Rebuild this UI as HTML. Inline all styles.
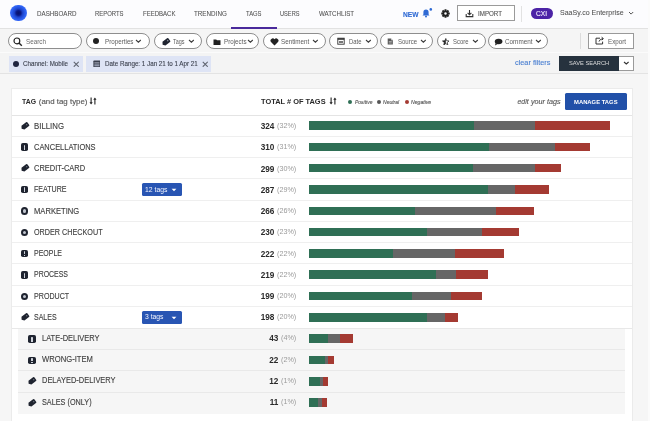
<!DOCTYPE html>
<html><head><meta charset="utf-8">
<style>
*{box-sizing:border-box;margin:0;padding:0}
html,body{width:650px;height:421px;overflow:hidden;background:#f6f6f6;font-family:"Liberation Sans",sans-serif;color:#333}
#wrap{position:absolute;left:0;top:0;width:650px;height:421px;overflow:hidden}
.a{position:absolute}
.t{position:absolute;line-height:1;white-space:nowrap;-webkit-text-stroke:0.12px currentColor}
#hdr{left:0;top:0;width:648px;height:28.5px;background:#fcfcfe;border-bottom:1px solid #e2e2e2}
#fbar{left:0;top:28.5px;width:648px;height:24.5px;background:#f5f5f5;border-bottom:1px solid #fbfbfb}
#crow{left:0;top:53px;width:648px;height:21px;background:#f4f4f4;border-bottom:1px solid #e3e3e3}
.pill{position:absolute;top:33.1px;height:16px;border:1px solid #8e8e8e;border-radius:8px;background:#fff}
.chip{position:absolute;top:55.7px;height:16px;background:#dee4f5}
#card{left:11px;top:88.3px;width:621.6px;height:340px;background:#fff;border:1px solid #ebebeb}
.rl{position:absolute;left:12px;width:619.6px;height:1px;background:#efefef}
.bar{position:absolute;height:8.6px}
.g{background:#2f6f55}.n{background:#666}.r{background:#a43a32}
.ico{position:absolute;width:7.4px;height:7.4px}
.ico.alert{background:#1f2430;border-radius:1.8px}
.ico.alert::before{content:"";position:absolute;left:2.9px;top:1.3px;width:1.6px;height:3.2px;border-radius:0.6px;background:#d0d4dc}.ico.alert::after{content:"";position:absolute;left:2.9px;top:5.0px;width:1.6px;height:1.3px;background:#d0d4dc}
.ico.circ{width:7.6px;height:7.6px;border:2.8px solid #1f2430;border-radius:50%;background:#c0c5ce}
.ico.tag::before{content:"";position:absolute;left:0.2px;top:1.6px;width:7.6px;height:4.6px;background:#1f2430;border-radius:1.5px 2.3px 2.3px 1.5px;transform:rotate(-40deg)}
.badge{position:absolute;width:39.5px;height:13px;background:#2855b3;border-radius:1.5px}
</style></head><body><div id="wrap" style="filter:blur(0.35px)">
<div id="hdr" class="a"></div>
<div id="fbar" class="a"></div>
<div id="crow" class="a"></div>
<div class="a" style="left:648px;top:0;width:2px;height:421px;background:#fbfbfb"></div>

<!-- logo -->
<div class="a" style="left:10px;top:4.7px;width:16.6px;height:16.6px;border-radius:50%;background:radial-gradient(circle,#08126a 0,#0b1a86 20%,#1d44cc 36%,#2b5cec 56%,#3a70ff 76%,rgba(80,130,255,0.55) 90%,rgba(120,160,255,0) 100%)"></div>
<div class="a" style="left:231px;top:27px;width:45.5px;height:2px;background:#4a2a9c"></div>

<!-- right header -->
<svg class="a" style="left:421.3px;top:7.8px" width="12" height="10" viewBox="0 0 12 10">
 <path d="M1.5 7.6 L2.4 6.6 V4.2 A2.6 2.6 0 0 1 7.6 4.2 V6.6 L8.5 7.6 Z" fill="#2f6ad4"/>
 <circle cx="5" cy="8.6" r="1" fill="#2f6ad4"/>
 <circle cx="9.8" cy="1.4" r="1.3" fill="#2f6ad4"/>
</svg>
<svg class="a" style="left:440.7px;top:8.7px" width="9" height="9" viewBox="0 0 11 11">
 <g fill="#222" transform="translate(5.5 5.5)">
  <circle r="3.8"/>
  <rect x="-1.2" y="-5.2" width="2.4" height="10.4"/>
  <rect x="-1.2" y="-5.2" width="2.4" height="10.4" transform="rotate(45)"/>
  <rect x="-1.2" y="-5.2" width="2.4" height="10.4" transform="rotate(90)"/>
  <rect x="-1.2" y="-5.2" width="2.4" height="10.4" transform="rotate(135)"/>
  <circle r="1.5" fill="#fbfbfc"/>
 </g>
</svg>
<div class="a" style="left:456.6px;top:5px;width:58.6px;height:16.2px;border:1px solid #9a9a9a;background:#fff"></div>
<svg class="a" style="left:465px;top:9px" width="9" height="9" viewBox="0 0 9 9">
 <path d="M4.5 1 V5.6 M2.6 3.9 L4.5 5.8 L6.4 3.9 M1.2 5 V7.6 H7.8 V5" fill="none" stroke="#333" stroke-width="1.1"/>
</svg>
<div class="a" style="left:521px;top:6px;width:1px;height:16px;background:#e2e2e2"></div>
<div class="a" style="left:531px;top:8px;width:22px;height:11px;border-radius:5.5px;background:#4c23a6"></div>

<!-- filter pills -->
<div class="pill" style="left:8px;width:74px"></div>
<svg class="a" style="left:13.2px;top:36.8px" width="10" height="10" viewBox="0 0 10 10"><circle cx="3.9" cy="3.9" r="2.9" fill="none" stroke="#222" stroke-width="1.15"/><path d="M6 6 L8.8 8.8" stroke="#222" stroke-width="1.4"/></svg>
<div class="pill" style="left:85.5px;width:64.5px"></div>
<div class="a" style="left:93.3px;top:38px;width:6px;height:6px;border-radius:50%;background:#222"></div>
<div class="pill" style="left:153.5px;width:48px"></div>
<svg class="a" style="left:160.8px;top:36.6px" width="10" height="10" viewBox="-5 -5 10 10"><g transform="rotate(-38)"><path d="M-4.3 0 L-2.6 -2.4 H3.2 Q4.1 -2.4 4.1 -1.5 V1.5 Q4.1 2.4 3.2 2.4 H-2.6 Z" fill="#1f2430"/><circle cx="2.2" cy="0" r="0.75" fill="#8a909c"/></g></svg>
<div class="pill" style="left:205.5px;width:53.5px"></div>
<svg class="a" style="left:213px;top:37.5px" width="8" height="8" viewBox="0 0 8 8"><path d="M0.5 1.5 H3.2 L4 2.3 H7.5 V7 H0.5 Z" fill="#222"/></svg>
<div class="pill" style="left:263px;width:62.5px"></div>
<svg class="a" style="left:269.5px;top:37.5px" width="9" height="8" viewBox="0 0 9 8"><path d="M4.5 7.4 L1 4 A2 2 0 0 1 4.5 1.3 A2 2 0 0 1 8 4 Z" fill="#222"/></svg>
<div class="pill" style="left:328.5px;width:49px"></div>
<svg class="a" style="left:336.5px;top:37.3px" width="8" height="8" viewBox="0 0 8 8"><rect x="0.8" y="1.2" width="6.4" height="6" fill="none" stroke="#333" stroke-width="0.9"/><rect x="0.8" y="1.2" width="6.4" height="1.6" fill="#333"/><rect x="2" y="4" width="4" height="2" fill="#777"/></svg>
<div class="pill" style="left:380px;width:52.5px"></div>
<svg class="a" style="left:387.3px;top:37.8px" width="6.4" height="7" viewBox="0 0 8 9"><path d="M0.8 0.6 H5 L7.4 3 V8.4 H0.8 Z" fill="#5a5a5a"/><path d="M5 0.6 V3 H7.4" fill="#ccc"/><path d="M2.2 4.6 H6 M2.2 6.4 H6" stroke="#ddd" stroke-width="0.8"/></svg>
<div class="pill" style="left:436.5px;width:49px"></div>
<svg class="a" style="left:441.8px;top:37.6px" width="7.6" height="7.6" viewBox="0 0 9 9"><path d="M4.5 0.6 L5.6 3.3 L8.4 3.5 L6.2 5.3 L6.9 8.2 L4.5 6.6 L2.1 8.2 L2.8 5.3 L0.6 3.5 L3.4 3.3 Z" fill="none" stroke="#222" stroke-width="0.9"/><path d="M4.5 0.6 L3.4 3.3 L0.6 3.5 L2.8 5.3 L2.1 8.2 L4.5 6.6 Z" fill="#222"/></svg>
<div class="pill" style="left:488px;width:59.5px"></div>
<svg class="a" style="left:493.8px;top:37.5px" width="9" height="8" viewBox="0 0 9 8"><ellipse cx="4.6" cy="3.5" rx="3.8" ry="2.8" fill="#222"/><path d="M1.6 5 L1 7.4 L3.6 6" fill="#222"/></svg>
<div class="a" style="left:580.3px;top:33px;width:1px;height:15.5px;background:#dcdcdc"></div>
<div class="a" style="left:588px;top:32.6px;width:46.3px;height:16px;border:1px solid #999;background:#fff"></div>
<svg class="a" style="left:595px;top:35.5px" width="10" height="9" viewBox="0 0 10 9"><path d="M5 2.2 H1 V8 H7.6 V5.6" fill="none" stroke="#333" stroke-width="1"/><path d="M4 5.6 Q4.6 3 8 2.6 M6.6 1.2 L8.4 2.6 L6.8 4.2" fill="none" stroke="#333" stroke-width="1"/></svg>

<!-- chips -->
<div class="chip" style="left:9px;width:74.3px"></div>
<div class="a" style="left:12.8px;top:60.6px;width:6.4px;height:6.4px;border-radius:50%;background:#1f2540"></div>
<svg class="a" style="left:72.5px;top:60.6px" width="6.5" height="6.5" viewBox="0 0 6 6"><path d="M0.7 0.7 L5.3 5.3 M5.3 0.7 L0.7 5.3" stroke="#5f6470" stroke-width="1"/></svg>
<div class="chip" style="left:86.3px;width:125.2px"></div>
<svg class="a" style="left:92.6px;top:59.6px" width="7.8" height="7.8" viewBox="0 0 8 8"><rect x="0.4" y="0.6" width="7.2" height="6.9" rx="0.6" fill="#3a3f4e"/><rect x="1.4" y="2.6" width="5.2" height="0.8" fill="#cfd5e6"/><rect x="1.4" y="4.4" width="5.2" height="2.1" fill="#8f96aa"/></svg>
<svg class="a" style="left:201.5px;top:60.6px" width="6.5" height="6.5" viewBox="0 0 6 6"><path d="M0.7 0.7 L5.3 5.3 M5.3 0.7 L0.7 5.3" stroke="#5f6470" stroke-width="1"/></svg>
<div class="a" style="left:559.3px;top:55.7px;width:59.7px;height:15.1px;background:#26323e"></div>
<div class="a" style="left:619px;top:55.7px;width:14.8px;height:15.1px;border:1px solid #9a9a9a;border-left:none;background:#fff"></div>

<!-- card -->
<div id="card" class="a"></div>
<svg class="a" style="left:89px;top:97.3px" width="8" height="8" viewBox="0 0 8 8"><path d="M2.1 0.6 V6.2" stroke="#222" stroke-width="1.1"/><path d="M0.5 5.2 L2.1 7.6 L3.7 5.2 Z" fill="#222"/><path d="M5.9 7.4 V1.8" stroke="#222" stroke-width="1.1"/><path d="M4.3 2.8 L5.9 0.4 L7.5 2.8 Z" fill="#222"/></svg>
<svg class="a" style="left:329.3px;top:97.3px" width="8" height="8" viewBox="0 0 8 8"><path d="M2.1 0.6 V6.2" stroke="#222" stroke-width="1.1"/><path d="M0.5 5.2 L2.1 7.6 L3.7 5.2 Z" fill="#222"/><path d="M5.9 7.4 V1.8" stroke="#222" stroke-width="1.1"/><path d="M4.3 2.8 L5.9 0.4 L7.5 2.8 Z" fill="#222"/></svg>
<div class="a" style="left:348.4px;top:100px;width:4px;height:4px;border-radius:50%;background:#2f6f55"></div>
<div class="a" style="left:377.2px;top:100px;width:4px;height:4px;border-radius:50%;background:#555"></div>
<div class="a" style="left:404.5px;top:100px;width:4px;height:4px;border-radius:50%;background:#a43a32"></div>
<div class="a" style="left:564.5px;top:92.8px;width:62px;height:17px;background:#2150a8;border-radius:1.5px"></div>
<div class="rl" style="top:114.6px;background:#e4e4e4"></div>
<div class="a" style="left:17.5px;top:327.7px;width:607px;height:86.6px;background:#f6f6f6"></div>
<svg class="a" style="left:20.00px;top:120.55px" width="10" height="10" viewBox="-5 -5 10 10"><g transform="rotate(-38)"><path d="M-4.3 0 L-2.6 -2.4 H3.2 Q4.1 -2.4 4.1 -1.5 V1.5 Q4.1 2.4 3.2 2.4 H-2.6 Z" fill="#1f2430"/><circle cx="2.2" cy="0" r="0.7" fill="#6a707c"/></g></svg>
<div class="bar g" style="left:308.8px;top:121.25px;width:165.20px"></div>
<div class="bar n" style="left:474px;top:121.25px;width:60.80px"></div>
<div class="bar r" style="left:534.8px;top:121.25px;width:75.60px"></div>
<div class="ico alert" style="left:20.90px;top:143.47px"></div>
<div class="bar g" style="left:308.8px;top:142.56px;width:180.00px"></div>
<div class="bar n" style="left:488.8px;top:142.56px;width:66.00px"></div>
<div class="bar r" style="left:554.8px;top:142.56px;width:35.20px"></div>
<svg class="a" style="left:20.00px;top:163.18px" width="10" height="10" viewBox="-5 -5 10 10"><g transform="rotate(-38)"><path d="M-4.3 0 L-2.6 -2.4 H3.2 Q4.1 -2.4 4.1 -1.5 V1.5 Q4.1 2.4 3.2 2.4 H-2.6 Z" fill="#1f2430"/><circle cx="2.2" cy="0" r="0.7" fill="#6a707c"/></g></svg>
<div class="bar g" style="left:308.8px;top:163.88px;width:164.40px"></div>
<div class="bar n" style="left:473.2px;top:163.88px;width:61.60px"></div>
<div class="bar r" style="left:534.8px;top:163.88px;width:26.00px"></div>
<div class="ico alert" style="left:20.90px;top:186.09px"></div>
<div class="bar g" style="left:308.8px;top:185.19px;width:179.20px"></div>
<div class="bar n" style="left:488px;top:185.19px;width:26.80px"></div>
<div class="bar r" style="left:514.8px;top:185.19px;width:34.40px"></div>
<div class="badge" style="left:142px;top:183.19px"></div>
<div class="ico circ" style="left:20.90px;top:207.40px"></div>
<div class="bar g" style="left:308.8px;top:206.50px;width:106.40px"></div>
<div class="bar n" style="left:415.2px;top:206.50px;width:80.80px"></div>
<div class="bar r" style="left:496px;top:206.50px;width:38.40px"></div>
<div class="ico circ" style="left:20.90px;top:228.71px"></div>
<div class="bar g" style="left:308.8px;top:227.81px;width:118.40px"></div>
<div class="bar n" style="left:427.2px;top:227.81px;width:55.20px"></div>
<div class="bar r" style="left:482.4px;top:227.81px;width:36.80px"></div>
<div class="ico alert" style="left:20.90px;top:250.01px"></div>
<div class="bar g" style="left:308.8px;top:249.11px;width:84.40px"></div>
<div class="bar n" style="left:393.2px;top:249.11px;width:61.60px"></div>
<div class="bar r" style="left:454.8px;top:249.11px;width:49.20px"></div>
<div class="ico alert" style="left:20.90px;top:271.32px"></div>
<div class="bar g" style="left:308.8px;top:270.42px;width:127.20px"></div>
<div class="bar n" style="left:436px;top:270.42px;width:20.00px"></div>
<div class="bar r" style="left:456px;top:270.42px;width:32.00px"></div>
<div class="ico circ" style="left:20.90px;top:292.63px"></div>
<div class="bar g" style="left:308.8px;top:291.74px;width:103.20px"></div>
<div class="bar n" style="left:412px;top:291.74px;width:39.20px"></div>
<div class="bar r" style="left:451.2px;top:291.74px;width:30.80px"></div>
<svg class="a" style="left:20.00px;top:312.34px" width="10" height="10" viewBox="-5 -5 10 10"><g transform="rotate(-38)"><path d="M-4.3 0 L-2.6 -2.4 H3.2 Q4.1 -2.4 4.1 -1.5 V1.5 Q4.1 2.4 3.2 2.4 H-2.6 Z" fill="#1f2430"/><circle cx="2.2" cy="0" r="0.7" fill="#6a707c"/></g></svg>
<div class="bar g" style="left:308.8px;top:313.04px;width:118.40px"></div>
<div class="bar n" style="left:427.2px;top:313.04px;width:18.00px"></div>
<div class="bar r" style="left:445.2px;top:313.04px;width:12.80px"></div>
<div class="badge" style="left:142px;top:311.04px"></div>
<div class="ico alert" style="left:28.30px;top:335.25px"></div>
<div class="bar g" style="left:308.8px;top:334.36px;width:19.20px"></div>
<div class="bar n" style="left:328px;top:334.36px;width:12.00px"></div>
<div class="bar r" style="left:340px;top:334.36px;width:13.20px"></div>
<div class="ico alert" style="left:28.30px;top:356.56px"></div>
<div class="bar g" style="left:308.8px;top:355.66px;width:16.00px"></div>
<div class="bar n" style="left:324.8px;top:355.66px;width:3.20px"></div>
<div class="bar r" style="left:328px;top:355.66px;width:6.40px"></div>
<svg class="a" style="left:27.10px;top:376.28px" width="10" height="10" viewBox="-5 -5 10 10"><g transform="rotate(-38)"><path d="M-4.3 0 L-2.6 -2.4 H3.2 Q4.1 -2.4 4.1 -1.5 V1.5 Q4.1 2.4 3.2 2.4 H-2.6 Z" fill="#1f2430"/><circle cx="2.2" cy="0" r="0.7" fill="#6a707c"/></g></svg>
<div class="bar g" style="left:308.8px;top:376.98px;width:11.20px"></div>
<div class="bar n" style="left:320px;top:376.98px;width:2.80px"></div>
<div class="bar r" style="left:322.8px;top:376.98px;width:5.60px"></div>
<svg class="a" style="left:27.10px;top:397.58px" width="10" height="10" viewBox="-5 -5 10 10"><g transform="rotate(-38)"><path d="M-4.3 0 L-2.6 -2.4 H3.2 Q4.1 -2.4 4.1 -1.5 V1.5 Q4.1 2.4 3.2 2.4 H-2.6 Z" fill="#1f2430"/><circle cx="2.2" cy="0" r="0.7" fill="#6a707c"/></g></svg>
<div class="bar g" style="left:308.8px;top:398.28px;width:9.20px"></div>
<div class="bar n" style="left:318px;top:398.28px;width:4.00px"></div>
<div class="bar r" style="left:322px;top:398.28px;width:5.20px"></div>
<div class="rl" style="top:135.61px"></div>
<div class="rl" style="top:156.92px"></div>
<div class="rl" style="top:178.23px"></div>
<div class="rl" style="top:199.54px"></div>
<div class="rl" style="top:220.85px"></div>
<div class="rl" style="top:242.16px"></div>
<div class="rl" style="top:263.47px"></div>
<div class="rl" style="top:284.78px"></div>
<div class="rl" style="top:306.09px"></div>
<div class="rl" style="top:327.70px;background:#e8e8e8"></div>
<div class="a" style="left:17.5px;width:607px;top:348.91px;height:1px;background:#e9e9e9"></div>
<div class="a" style="left:17.5px;width:607px;top:370.22px;height:1px;background:#e9e9e9"></div>
<div class="a" style="left:17.5px;width:607px;top:391.53px;height:1px;background:#e9e9e9"></div>
<svg class="a" style="left:134.80px;top:39.20px" width="6.8" height="4.2"><path d="M1 1 L3.40 3.20 L5.80 1" fill="none" stroke="#3a3a3a" stroke-width="1.05"/></svg>
<svg class="a" style="left:188.00px;top:39.20px" width="6.8" height="4.2"><path d="M1 1 L3.40 3.20 L5.80 1" fill="none" stroke="#3a3a3a" stroke-width="1.05"/></svg>
<svg class="a" style="left:247.10px;top:39.20px" width="6.8" height="4.2"><path d="M1 1 L3.40 3.20 L5.80 1" fill="none" stroke="#3a3a3a" stroke-width="1.05"/></svg>
<svg class="a" style="left:311.50px;top:39.20px" width="6.8" height="4.2"><path d="M1 1 L3.40 3.20 L5.80 1" fill="none" stroke="#3a3a3a" stroke-width="1.05"/></svg>
<svg class="a" style="left:365.00px;top:39.20px" width="6.8" height="4.2"><path d="M1 1 L3.40 3.20 L5.80 1" fill="none" stroke="#3a3a3a" stroke-width="1.05"/></svg>
<svg class="a" style="left:419.50px;top:39.20px" width="6.8" height="4.2"><path d="M1 1 L3.40 3.20 L5.80 1" fill="none" stroke="#3a3a3a" stroke-width="1.05"/></svg>
<svg class="a" style="left:472.30px;top:39.20px" width="6.8" height="4.2"><path d="M1 1 L3.40 3.20 L5.80 1" fill="none" stroke="#3a3a3a" stroke-width="1.05"/></svg>
<svg class="a" style="left:535.00px;top:39.20px" width="6.8" height="4.2"><path d="M1 1 L3.40 3.20 L5.80 1" fill="none" stroke="#3a3a3a" stroke-width="1.05"/></svg>
<svg class="a" style="left:627.70px;top:10.85px" width="6.2" height="4.1"><path d="M1 1 L3.10 3.10 L5.20 1" fill="none" stroke="#555" stroke-width="1.0"/></svg>
<svg class="a" style="left:623.10px;top:60.90px" width="6.6" height="4.0"><path d="M1 1 L3.30 3.00 L5.60 1" fill="none" stroke="#333" stroke-width="1.1"/></svg>
<svg class="a" style="left:170.5px;top:187.88px" width="6" height="4"><path d="M0.6 0.8 L3 3.2 L5.4 0.8 Z" fill="#fff"/></svg>
<svg class="a" style="left:170.5px;top:315.74px" width="6" height="4"><path d="M0.6 0.8 L3 3.2 L5.4 0.8 Z" fill="#fff"/></svg>
<div class="t" style="left:37.40px;top:11.20px;font-size:6.6px;color:#505050;transform:scaleX(0.9454);transform-origin:0 0;-webkit-text-stroke:0.06px currentColor">DASHBOARD</div>
<div class="t" style="left:95.30px;top:11.20px;font-size:6.6px;color:#505050;transform:scaleX(0.8972);transform-origin:0 0;-webkit-text-stroke:0.06px currentColor">REPORTS</div>
<div class="t" style="left:143.30px;top:11.20px;font-size:6.6px;color:#505050;transform:scaleX(0.9143);transform-origin:0 0;-webkit-text-stroke:0.06px currentColor">FEEDBACK</div>
<div class="t" style="left:194.30px;top:11.20px;font-size:6.6px;color:#505050;transform:scaleX(0.9525);transform-origin:0 0;-webkit-text-stroke:0.06px currentColor">TRENDING</div>
<div class="t" style="left:245.90px;top:11.20px;font-size:6.6px;color:#505050;transform:scaleX(0.8873);transform-origin:0 0;-webkit-text-stroke:0.06px currentColor">TAGS</div>
<div class="t" style="left:280.30px;top:11.20px;font-size:6.6px;color:#505050;transform:scaleX(0.8583);transform-origin:0 0;-webkit-text-stroke:0.06px currentColor">USERS</div>
<div class="t" style="left:318.70px;top:11.20px;font-size:6.6px;color:#505050;transform:scaleX(0.9391);transform-origin:0 0;-webkit-text-stroke:0.06px currentColor">WATCHLIST</div>
<div class="t" style="left:403.30px;top:11.20px;font-size:7.2px;color:#2f6ad4;font-weight:bold;transform:scaleX(0.9236);transform-origin:0 0">NEW</div>
<div class="t" style="left:478.30px;top:11.20px;font-size:6.6px;color:#555;transform:scaleX(0.9400);transform-origin:0 0">IMPORT</div>
<div class="t" style="left:535.80px;top:11.20px;font-size:6.8px;color:#f4f0ff;transform:scaleX(0.9697);transform-origin:0 0">CXI</div>
<div class="t" style="left:560.00px;top:9.20px;font-size:7.6px;color:#4f4f4f;transform:scaleX(0.9261);transform-origin:0 0;-webkit-text-stroke:0.06px currentColor">SaaSy.co Enterprise</div>
<div class="t" style="left:25.50px;top:39.20px;font-size:7.1px;color:#6a6a6a;transform:scaleX(0.8895);transform-origin:0 0;-webkit-text-stroke:0">Search</div>
<div class="t" style="left:105.30px;top:39.20px;font-size:7.1px;color:#5c5c5c;transform:scaleX(0.8812);transform-origin:0 0;-webkit-text-stroke:0">Properties</div>
<div class="t" style="left:173.30px;top:39.20px;font-size:7.1px;color:#5c5c5c;transform:scaleX(0.7675);transform-origin:0 0;-webkit-text-stroke:0">Tags</div>
<div class="t" style="left:224.30px;top:39.20px;font-size:7.1px;color:#5c5c5c;transform:scaleX(0.8780);transform-origin:0 0;-webkit-text-stroke:0">Projects</div>
<div class="t" style="left:280.90px;top:39.20px;font-size:7.1px;color:#5c5c5c;transform:scaleX(0.8857);transform-origin:0 0;-webkit-text-stroke:0">Sentiment</div>
<div class="t" style="left:349.30px;top:39.20px;font-size:7.1px;color:#5c5c5c;transform:scaleX(0.8342);transform-origin:0 0;-webkit-text-stroke:0">Date</div>
<div class="t" style="left:397.70px;top:39.20px;font-size:7.1px;color:#5c5c5c;transform:scaleX(0.8495);transform-origin:0 0;-webkit-text-stroke:0">Source</div>
<div class="t" style="left:453.30px;top:39.20px;font-size:7.1px;color:#5c5c5c;transform:scaleX(0.8364);transform-origin:0 0;-webkit-text-stroke:0">Score</div>
<div class="t" style="left:505.30px;top:39.20px;font-size:7.1px;color:#5c5c5c;transform:scaleX(0.8943);transform-origin:0 0;-webkit-text-stroke:0">Comment</div>
<div class="t" style="left:608.30px;top:39.20px;font-size:7.1px;color:#5c5c5c;transform:scaleX(0.8774);transform-origin:0 0;-webkit-text-stroke:0">Export</div>
<div class="t" style="left:23.40px;top:60.20px;font-size:7.2px;color:#3a3f4c;transform:scaleX(0.8662);transform-origin:0 0">Channel: Mobile</div>
<div class="t" style="left:104.90px;top:60.20px;font-size:7.2px;color:#3a3f4c;transform:scaleX(0.8697);transform-origin:0 0">Date Range: 1 Jan 21 to 1 Apr 21</div>
<div class="t" style="left:515.30px;top:59.20px;font-size:7.3px;color:#4a7fd0;transform:scaleX(1.0034);transform-origin:0 0">clear filters</div>
<div class="t" style="left:569.30px;top:60.20px;font-size:6.0px;color:#dcdcdc;transform:scaleX(0.9518);transform-origin:0 0;-webkit-text-stroke:0">SAVE SEARCH</div>
<div class="t" style="left:22.20px;top:98.20px;font-size:7.8px;color:#2a2a2a;font-weight:bold;transform:scaleX(0.8810);transform-origin:0 0;-webkit-text-stroke:0">TAG</div>
<div class="t" style="left:38.80px;top:98.20px;font-size:7.9px;color:#555">(and tag type)</div>
<div class="t" style="left:260.60px;top:98.20px;font-size:7.8px;color:#2a2a2a;font-weight:bold;transform:scaleX(0.9517);transform-origin:0 0;-webkit-text-stroke:0">TOTAL # OF TAGS</div>
<div class="t" style="left:355.30px;top:100.20px;font-size:5.2px;color:#555;font-style:italic;transform:scaleX(0.9575);transform-origin:0 0">Positive</div>
<div class="t" style="left:383.30px;top:100.20px;font-size:5.2px;color:#555;font-style:italic;transform:scaleX(0.9681);transform-origin:0 0">Neutral</div>
<div class="t" style="left:411.30px;top:100.20px;font-size:5.2px;color:#555;font-style:italic;transform:scaleX(0.9861);transform-origin:0 0">Negative</div>
<div class="t" style="left:517.60px;top:99.20px;font-size:6.8px;color:#555;font-style:italic">edit</div>
<div class="t" style="left:530.60px;top:99.20px;font-size:6.8px;color:#555;font-style:italic;transform:scaleX(1.0583);transform-origin:0 0">your tags</div>
<div class="t" style="left:574.30px;top:99.20px;font-size:6.2px;color:#fff;font-weight:bold;transform:scaleX(0.9488);transform-origin:0 0;-webkit-text-stroke:0">MANAGE TAGS</div>
<div class="t" style="left:34.00px;top:122.20px;font-size:8.6px;color:#3d3d3d;transform:scaleX(0.9100);transform-origin:0 0">BILLING</div>
<div class="t" style="right:353.80px;top:122.20px;font-size:7.2px;color:#9a9a9a;-webkit-text-stroke:0"><b style="color:#2a2a2a;font-size:8.2px;margin-right:2.6px;vertical-align:-1px">324</b><span style="letter-spacing:0">(32%)</span></div>
<div class="t" style="left:34.00px;top:143.20px;font-size:8.6px;color:#3d3d3d;transform:scaleX(0.8676);transform-origin:0 0">CANCELLATIONS</div>
<div class="t" style="right:353.80px;top:143.20px;font-size:7.2px;color:#9a9a9a;-webkit-text-stroke:0"><b style="color:#2a2a2a;font-size:8.2px;margin-right:2.6px;vertical-align:-1px">310</b><span style="letter-spacing:0">(31%)</span></div>
<div class="t" style="left:34.00px;top:164.20px;font-size:8.6px;color:#3d3d3d;transform:scaleX(0.8717);transform-origin:0 0">CREDIT-CARD</div>
<div class="t" style="right:353.80px;top:165.20px;font-size:7.2px;color:#9a9a9a;-webkit-text-stroke:0"><b style="color:#2a2a2a;font-size:8.2px;margin-right:2.6px;vertical-align:-1px">299</b><span style="letter-spacing:0">(30%)</span></div>
<div class="t" style="left:34.00px;top:185.20px;font-size:8.6px;color:#3d3d3d;transform:scaleX(0.8260);transform-origin:0 0">FEATURE</div>
<div class="t" style="right:353.80px;top:186.20px;font-size:7.2px;color:#9a9a9a;-webkit-text-stroke:0"><b style="color:#2a2a2a;font-size:8.2px;margin-right:2.6px;vertical-align:-1px">287</b><span style="letter-spacing:0">(29%)</span></div>
<div class="t" style="left:145.30px;top:187.20px;font-size:6.7px;color:#f4f6ff;transform:scaleX(1.0211);transform-origin:0 0;-webkit-text-stroke:0">12 tags</div>
<div class="t" style="left:34.00px;top:207.20px;font-size:8.6px;color:#3d3d3d;transform:scaleX(0.8846);transform-origin:0 0">MARKETING</div>
<div class="t" style="right:353.80px;top:207.20px;font-size:7.2px;color:#9a9a9a;-webkit-text-stroke:0"><b style="color:#2a2a2a;font-size:8.2px;margin-right:2.6px;vertical-align:-1px">266</b><span style="letter-spacing:0">(26%)</span></div>
<div class="t" style="left:34.00px;top:228.20px;font-size:8.6px;color:#3d3d3d;transform:scaleX(0.8401);transform-origin:0 0">ORDER CHECKOUT</div>
<div class="t" style="right:353.80px;top:228.20px;font-size:7.2px;color:#9a9a9a;-webkit-text-stroke:0"><b style="color:#2a2a2a;font-size:8.2px;margin-right:2.6px;vertical-align:-1px">230</b><span style="letter-spacing:0">(23%)</span></div>
<div class="t" style="left:34.00px;top:249.20px;font-size:8.6px;color:#3d3d3d;transform:scaleX(0.8138);transform-origin:0 0">PEOPLE</div>
<div class="t" style="right:353.80px;top:250.20px;font-size:7.2px;color:#9a9a9a;-webkit-text-stroke:0"><b style="color:#2a2a2a;font-size:8.2px;margin-right:2.6px;vertical-align:-1px">222</b><span style="letter-spacing:0">(22%)</span></div>
<div class="t" style="left:34.00px;top:270.20px;font-size:8.6px;color:#3d3d3d;transform:scaleX(0.8089);transform-origin:0 0">PROCESS</div>
<div class="t" style="right:353.80px;top:271.20px;font-size:7.2px;color:#9a9a9a;-webkit-text-stroke:0"><b style="color:#2a2a2a;font-size:8.2px;margin-right:2.6px;vertical-align:-1px">219</b><span style="letter-spacing:0">(22%)</span></div>
<div class="t" style="left:34.00px;top:292.20px;font-size:8.6px;color:#3d3d3d;transform:scaleX(0.8282);transform-origin:0 0">PRODUCT</div>
<div class="t" style="right:353.80px;top:292.20px;font-size:7.2px;color:#9a9a9a;-webkit-text-stroke:0"><b style="color:#2a2a2a;font-size:8.2px;margin-right:2.6px;vertical-align:-1px">199</b><span style="letter-spacing:0">(20%)</span></div>
<div class="t" style="left:34.00px;top:313.20px;font-size:8.6px;color:#3d3d3d;transform:scaleX(0.8153);transform-origin:0 0">SALES</div>
<div class="t" style="right:353.80px;top:313.20px;font-size:7.2px;color:#9a9a9a;-webkit-text-stroke:0"><b style="color:#2a2a2a;font-size:8.2px;margin-right:2.6px;vertical-align:-1px">198</b><span style="letter-spacing:0">(20%)</span></div>
<div class="t" style="left:145.30px;top:314.20px;font-size:6.7px;color:#f4f6ff;transform:scaleX(1.0154);transform-origin:0 0;-webkit-text-stroke:0">3 tags</div>
<div class="t" style="left:42.00px;top:334.20px;font-size:8.6px;color:#3d3d3d;transform:scaleX(0.8717);transform-origin:0 0">LATE-DELIVERY</div>
<div class="t" style="right:353.80px;top:334.20px;font-size:7.2px;color:#9a9a9a;-webkit-text-stroke:0"><b style="color:#2a2a2a;font-size:8.2px;margin-right:2.6px;vertical-align:-1px">43</b><span style="letter-spacing:0">(4%)</span></div>
<div class="t" style="left:42.00px;top:355.20px;font-size:8.6px;color:#3d3d3d;transform:scaleX(0.8901);transform-origin:0 0">WRONG-ITEM</div>
<div class="t" style="right:353.80px;top:356.20px;font-size:7.2px;color:#9a9a9a;-webkit-text-stroke:0"><b style="color:#2a2a2a;font-size:8.2px;margin-right:2.6px;vertical-align:-1px">22</b><span style="letter-spacing:0">(2%)</span></div>
<div class="t" style="left:42.00px;top:376.20px;font-size:8.6px;color:#3d3d3d;transform:scaleX(0.8689);transform-origin:0 0">DELAYED-DELIVERY</div>
<div class="t" style="right:353.80px;top:377.20px;font-size:7.2px;color:#9a9a9a;-webkit-text-stroke:0"><b style="color:#2a2a2a;font-size:8.2px;margin-right:2.6px;vertical-align:-1px">12</b><span style="letter-spacing:0">(1%)</span></div>
<div class="t" style="left:42.00px;top:398.20px;font-size:8.6px;color:#3d3d3d;transform:scaleX(0.8465);transform-origin:0 0">SALES (ONLY)</div>
<div class="t" style="right:353.80px;top:398.20px;font-size:7.2px;color:#9a9a9a;-webkit-text-stroke:0"><b style="color:#2a2a2a;font-size:8.2px;margin-right:2.6px;vertical-align:-1px">11</b><span style="letter-spacing:0">(1%)</span></div>
</div></body></html>
